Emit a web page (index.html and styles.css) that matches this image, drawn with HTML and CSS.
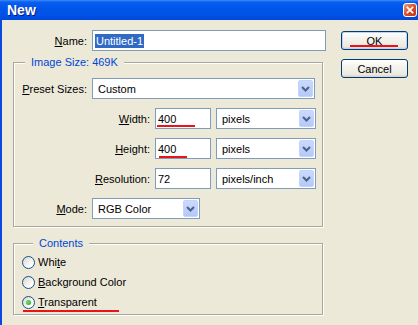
FILE: index.html
```html
<!DOCTYPE html>
<html lang="en">
<head>
    <meta charset="UTF-8">
    <meta name="viewport" content="width=device-width, initial-scale=1.0">
    <title>New</title>
    <link rel="stylesheet" href="styles.css">
</head>
<body>
    <div class="window">
        <div class="titlebar">
            <span class="title">New</span>
            <span class="close">
                <svg width="14" height="14" viewBox="0 0 14 14"><path d="M4 4 L10 10 M10 4 L4 10" stroke="#fff" stroke-width="2" stroke-linecap="square"/></svg>
            </span>
        </div>

        <div class="client">
            <div class="main">
                <div class="row">
                    <label class="lbl"><u>N</u>ame:</label>
                    <div class="field name-field"><span class="selected">Untitled-1</span></div>
                </div>

                <!-- Image Size -->
                <fieldset class="group size-group">
                    <legend>Image Size: 469K</legend>
                    <div class="rows">
                        <div class="row">
                            <label class="lbl"><u>P</u>reset Sizes:</label>
                            <div class="combo preset"><span class="value">Custom</span><span class="drop"><svg width="9" height="6" viewBox="0 0 9 6"><path d="M1 1 L4.5 4.5 L8 1" fill="none" stroke="#4d6185" stroke-width="2"/></svg></span></div>
                        </div>
                        <div class="row">
                            <label class="lbl lbl-long"><u>W</u>idth:</label>
                            <div class="field num">400</div>
                            <div class="combo unit"><span class="value">pixels</span><span class="drop"><svg width="9" height="6" viewBox="0 0 9 6"><path d="M1 1 L4.5 4.5 L8 1" fill="none" stroke="#4d6185" stroke-width="2"/></svg></span></div>
                        </div>
                        <div class="row">
                            <label class="lbl lbl-long"><u>H</u>eight:</label>
                            <div class="field num">400</div>
                            <div class="combo unit"><span class="value">pixels</span><span class="drop"><svg width="9" height="6" viewBox="0 0 9 6"><path d="M1 1 L4.5 4.5 L8 1" fill="none" stroke="#4d6185" stroke-width="2"/></svg></span></div>
                        </div>
                        <div class="row">
                            <label class="lbl lbl-long"><u>R</u>esolution:</label>
                            <div class="field num">72</div>
                            <div class="combo unit"><span class="value">pixels/inch</span><span class="drop"><svg width="9" height="6" viewBox="0 0 9 6"><path d="M1 1 L4.5 4.5 L8 1" fill="none" stroke="#4d6185" stroke-width="2"/></svg></span></div>
                        </div>
                        <div class="row">
                            <label class="lbl"><u>M</u>ode:</label>
                            <div class="combo mode"><span class="value">RGB Color</span><span class="drop"><svg width="9" height="6" viewBox="0 0 9 6"><path d="M1 1 L4.5 4.5 L8 1" fill="none" stroke="#4d6185" stroke-width="2"/></svg></span></div>
                        </div>
                    </div>
                </fieldset>

                <!-- Contents -->
                <fieldset class="group contents-group">
                    <legend>Contents</legend>
                    <div class="radio"><span class="dot"></span><span>Whi<u>t</u>e</span></div>
                    <div class="radio"><span class="dot"></span><span><u>B</u>ackground Color</span></div>
                    <div class="radio"><span class="dot checked"></span><span><u>T</u>ransparent</span></div>
                </fieldset>
            </div>

            <div class="side">
                <button class="btn default">OK</button>
                <button class="btn">Cancel</button>
            </div>
        </div>

        <!-- red marks drawn over the screenshot -->
        <span class="mark mark-ok"></span>
        <span class="mark mark-width"></span>
        <span class="mark mark-height"></span>
        <span class="mark mark-transparent"></span>
    </div>
</body>
</html>
```

FILE: styles.css
```css
/* Whole page */
body {
    margin: 0;
    padding: 0;
    font-family: "Liberation Sans", Arial, sans-serif;
    font-size: 11px;
    color: #000;
    background: #ece9d8;
    overflow: hidden;
}

.window {
    position: relative;
    width: 418px;
    height: 325px;
    background: #ece9d8;
}

/* Title bar */
.titlebar {
    height: 20px;
    display: flex;
    align-items: center;
    justify-content: space-between;
    padding: 0 1px 0 7px;
    background: linear-gradient(#3d8cf8 0, #0a5ff2 2px, #0055ea 8px, #0052e6 15px, #0047d8 20px);
}

.title {
    color: #fff;
    font-weight: bold;
    font-size: 14px;
    line-height: 20px;
    text-shadow: 1px 1px 0 #0a1883;
}

.close {
    width: 14px;
    height: 14px;
    box-sizing: border-box;
    border: 1px solid #fff;
    border-radius: 3px;
    background: linear-gradient(135deg, #f09b7d, #d84a23 55%, #c2350f);
    display: flex;
    align-items: center;
    justify-content: center;
}

.close svg {
    display: block;
}

/* Window body */
.client {
    display: flex;
    height: 305px;
    border-left: 2px solid #0a48df;
}

.main {
    width: 324px;
    box-sizing: border-box;
    padding: 10px 0 0 11px;
}

.side {
    display: flex;
    flex-direction: column;
    gap: 9px;
    padding: 11px 0 0 15px;
}

.row {
    display: flex;
    align-items: center;
    height: 21px;
    gap: 5px;
}

.lbl {
    width: 73px;
    text-align: right;
    white-space: nowrap;
}

.main > .row .lbl {
    width: 74px;
}

.lbl-long {
    width: 136px;
}

/* Text fields */
.field {
    height: 21px;
    box-sizing: border-box;
    border: 1px solid #7f9db9;
    background: #fff;
    display: flex;
    align-items: center;
    padding-left: 2px;
    white-space: nowrap;
}

.name-field {
    width: 234px;
}

.selected {
    background: #316ac5;
    color: #fff;
    line-height: 14px;
    padding: 0 1px;
}

.num {
    width: 56px;
}

/* Drop-down lists */
.combo {
    height: 21px;
    box-sizing: border-box;
    border: 1px solid #7f9db9;
    background: #fff;
    display: flex;
    align-items: stretch;
    padding: 1px;
}

.combo .value {
    flex: 1;
    display: flex;
    align-items: center;
    padding-left: 4px;
}

.drop {
    width: 15px;
    box-sizing: border-box;
    border: 1px solid #c3d3fd;
    border-radius: 2px;
    background: linear-gradient(#cbdafd, #b4c8f8);
    display: flex;
    align-items: center;
    justify-content: center;
}

.drop svg {
    display: block;
}

.preset {
    width: 223px;
}

.unit {
    width: 100px;
}

.mode {
    width: 108px;
}

/* Group boxes */
.group {
    margin: 0;
    padding: 0;
    min-width: 0;
    width: 310px;
    box-sizing: border-box;
    border: 1px solid #aca899;
    box-shadow: inset 1px 1px 0 #fff, 1px 1px 0 #fff;
}

.group legend {
    margin-left: 11px;
    padding: 0 6px;
    line-height: 13px;
    color: #0046d5;
    background: #ece9d8;
}

.size-group {
    margin-top: 5px;
    padding: 9px 0 7px 0;
}

.rows {
    display: flex;
    flex-direction: column;
    gap: 9px;
}

.contents-group {
    margin-top: 10px;
    padding: 2px 0 2px 8px;
}

.radio {
    display: flex;
    align-items: center;
    gap: 3px;
    height: 20px;
}

.dot {
    width: 13px;
    height: 13px;
    box-sizing: border-box;
    border: 1px solid #1c5180;
    border-radius: 50%;
    background: linear-gradient(135deg, #d6d5cf, #fff 75%);
    display: flex;
    align-items: center;
    justify-content: center;
}

.dot.checked::after {
    content: "";
    width: 5px;
    height: 5px;
    border-radius: 50%;
    background: radial-gradient(circle at 40% 40%, #6fe26b, #21a121);
}

/* Buttons */
.btn {
    width: 67px;
    height: 19px;
    padding: 0;
    font-family: inherit;
    font-size: 11px;
    color: #000;
    border: 1px solid #003c74;
    border-radius: 3px;
    background: linear-gradient(#fff, #f4f3ee 40%, #ebe9e1 85%, #d6d0c5);
}

.btn.default {
    box-shadow: inset 0 0 0 1px #bcd3f7;
}

/* Red marks */
.mark {
    position: absolute;
    height: 2px;
    background: #e8141a;
}

.mark-ok {
    left: 350px;
    top: 45px;
    width: 48px;
}

.mark-width {
    left: 157px;
    top: 125px;
    width: 38px;
}

.mark-height {
    left: 159px;
    top: 156px;
    width: 28px;
}

.mark-transparent {
    left: 23px;
    top: 310px;
    width: 96px;
}
```
